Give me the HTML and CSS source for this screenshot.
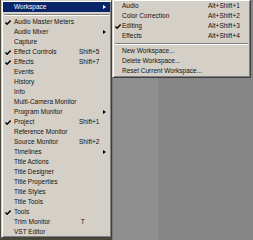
FILE: index.html
```html
<!DOCTYPE html>
<html lang="en">
<head>
    <meta charset="UTF-8">
    <title>Window menu</title>
    <link rel="stylesheet" href="styles.css">
</head>
<body>
    <div class="app">
        <div class="strip"></div>
        <div class="pane pane-left"></div>
        <div class="pane pane-right"></div>
    </div>

    <div class="menu main">
        <div class="item active"><span class="chk"></span><span class="lbl">Workspace</span><span class="key"></span><span class="arr"></span></div>
        <div class="sep"></div>
        <div class="item"><span class="chk"><svg width="6" height="5" viewBox="0 0 6 5"><path d="M0.4 2.4 L2.1 4.2 L5.6 0.6"/></svg></span><span class="lbl">Audio Master Meters</span><span class="key"></span><span></span></div>
        <div class="item"><span class="chk"></span><span class="lbl">Audio Mixer</span><span class="key"></span><span class="arr"></span></div>
        <div class="item"><span class="chk"></span><span class="lbl">Capture</span><span class="key"></span><span></span></div>
        <div class="item"><span class="chk"><svg width="6" height="5" viewBox="0 0 6 5"><path d="M0.4 2.4 L2.1 4.2 L5.6 0.6"/></svg></span><span class="lbl">Effect Controls</span><span class="key">Shift+5</span><span></span></div>
        <div class="item"><span class="chk"><svg width="6" height="5" viewBox="0 0 6 5"><path d="M0.4 2.4 L2.1 4.2 L5.6 0.6"/></svg></span><span class="lbl">Effects</span><span class="key">Shift+7</span><span></span></div>
        <div class="item"><span class="chk"></span><span class="lbl">Events</span><span class="key"></span><span></span></div>
        <div class="item"><span class="chk"></span><span class="lbl">History</span><span class="key"></span><span></span></div>
        <div class="item"><span class="chk"></span><span class="lbl">Info</span><span class="key"></span><span></span></div>
        <div class="item"><span class="chk"></span><span class="lbl">Multi-Camera Monitor</span><span class="key"></span><span></span></div>
        <div class="item"><span class="chk"></span><span class="lbl">Program Monitor</span><span class="key"></span><span class="arr"></span></div>
        <div class="item"><span class="chk"><svg width="6" height="5" viewBox="0 0 6 5"><path d="M0.4 2.4 L2.1 4.2 L5.6 0.6"/></svg></span><span class="lbl">Project</span><span class="key">Shift+1</span><span></span></div>
        <div class="item"><span class="chk"></span><span class="lbl">Reference Monitor</span><span class="key"></span><span></span></div>
        <div class="item"><span class="chk"></span><span class="lbl">Source Monitor</span><span class="key">Shift+2</span><span></span></div>
        <div class="item"><span class="chk"></span><span class="lbl">Timelines</span><span class="key"></span><span class="arr"></span></div>
        <div class="item"><span class="chk"></span><span class="lbl">Title Actions</span><span class="key"></span><span></span></div>
        <div class="item"><span class="chk"></span><span class="lbl">Title Designer</span><span class="key"></span><span></span></div>
        <div class="item"><span class="chk"></span><span class="lbl">Title Properties</span><span class="key"></span><span></span></div>
        <div class="item"><span class="chk"></span><span class="lbl">Title Styles</span><span class="key"></span><span></span></div>
        <div class="item"><span class="chk"></span><span class="lbl">Title Tools</span><span class="key"></span><span></span></div>
        <div class="item"><span class="chk"><svg width="6" height="5" viewBox="0 0 6 5"><path d="M0.4 2.4 L2.1 4.2 L5.6 0.6"/></svg></span><span class="lbl">Tools</span><span class="key"></span><span></span></div>
        <div class="item"><span class="chk"></span><span class="lbl">Trim Monitor</span><span class="key">&nbsp;T</span><span></span></div>
        <div class="item"><span class="chk"></span><span class="lbl">VST Editor</span><span class="key"></span><span></span></div>
    </div>

    <div class="menu sub">
        <div class="item"><span class="chk"></span><span class="lbl">Audio</span><span class="key">Alt+Shift+1</span><span></span></div>
        <div class="item"><span class="chk"></span><span class="lbl">Color Correction</span><span class="key">Alt+Shift+2</span><span></span></div>
        <div class="item"><span class="chk"><svg width="6" height="5" viewBox="0 0 6 5"><path d="M0.4 2.4 L2.1 4.2 L5.6 0.6"/></svg></span><span class="lbl">Editing</span><span class="key">Alt+Shift+3</span><span></span></div>
        <div class="item"><span class="chk"></span><span class="lbl">Effects</span><span class="key">Alt+Shift+4</span><span></span></div>
        <div class="sep"></div>
        <div class="item"><span class="chk"></span><span class="lbl">New Workspace...</span><span class="key"></span><span></span></div>
        <div class="item"><span class="chk"></span><span class="lbl">Delete Workspace...</span><span class="key"></span><span></span></div>
        <div class="item"><span class="chk"></span><span class="lbl">Reset Current Workspace...</span><span class="key"></span><span></span></div>
    </div>
</body>
</html>
```

FILE: styles.css
```css
*{
    box-sizing: border-box;
}
body{
    margin: 0;
    width: 253px;
    height: 240px;
    overflow: hidden;
    position: relative;
    font-family: "Liberation Sans", Arial, sans-serif;
    font-size: 6.5px;
    color: #111;
}

/* application behind the menus */
.app{
    display: flex;
    height: 240px;
}
.strip{
    width: 112px;
    background: #4a4839;
}
.pane-left{
    width: 46px;
    background: #8f8f8f;
    border-left: 1px solid #777;
}
.pane-right{
    flex: 1;
    background: #868686;
}

/* classic popup menu */
.menu{
    position: absolute;
    background: #d4d0c8;
    border: 1px solid;
    border-color: #d4d0c8 #404040 #404040 #d4d0c8;
    box-shadow: inset 1px 1px 0 #fff, inset -1px -1px 0 #808080;
    padding: 1px 1px 0;
}
.main{
    left: 1px;
    top: 0;
    width: 111px;
    height: 238px;
}
.sub{
    left: 112px;
    top: -1px;
    width: 139px;
    padding-bottom: 1px;
}

.item{
    display: grid;
    height: 10px;
    align-items: center;
    white-space: nowrap;
    line-height: 10px;
}
.main .item{
    grid-template-columns: 11px 65px 1fr 7px;
}
.sub .item{
    grid-template-columns: 8px 86px 1fr 4px;
}
.item.active{
    background: #0a246a;
    color: #fff;
}

.chk{
    display: flex;
    align-items: center;
    justify-content: center;
    height: 10px;
}
.main .chk{
    justify-content: flex-start;
    padding-left: 2px;
}
.chk svg path{
    fill: none;
    stroke: #000;
    stroke-width: 1.4;
}

.arr{
    width: 0;
    height: 0;
    border-left: 3px solid #000;
    border-top: 2.5px solid transparent;
    border-bottom: 2.5px solid transparent;
}
.active .arr{
    border-left-color: #fff;
}

.sep{
    height: 5px;
    margin: 0 1px;
    padding-top: 1.5px;
}
.sep::before{
    content: "";
    display: block;
    border-top: 1px solid #808080;
    border-bottom: 1px solid #fff;
}
```
